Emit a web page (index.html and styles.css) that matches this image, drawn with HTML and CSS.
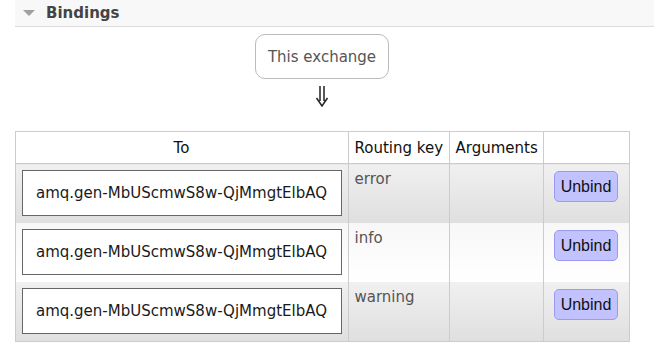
FILE: index.html
```html
<!DOCTYPE html>
<html lang="en">
<head>
  <meta charset="UTF-8">
  <title>Bindings</title>
  <link rel="stylesheet" href="styles.css">
</head>
<body>
  <div class="section">
    <h2 class="section-title"><span class="toggle"></span>Bindings</h2>

    <div class="bindings">
      <div class="source-box">This exchange</div>
      <svg class="down-arrow" width="14" height="21" viewBox="0 0 14 21">
        <path d="M5 0 V15 M9 0 V15 M1.5 12 L7 20 L12.5 12" fill="none" stroke="#222" stroke-width="1.5"/>
      </svg>

      <table class="list">
        <colgroup>
          <col class="c-to">
          <col class="c-key">
          <col class="c-args">
          <col class="c-act">
        </colgroup>
        <thead>
          <tr>
            <th class="col-to">To</th>
            <th>Routing key</th>
            <th>Arguments</th>
            <th></th>
          </tr>
        </thead>
        <tbody>
          <tr class="alt1">
            <td><div class="dest">amq.gen-MbUScmwS8w-QjMmgtElbAQ</div></td>
            <td class="key">error</td>
            <td></td>
            <td class="action"><button class="unbind">Unbind</button></td>
          </tr>
          <tr class="alt2">
            <td><div class="dest">amq.gen-MbUScmwS8w-QjMmgtElbAQ</div></td>
            <td class="key">info</td>
            <td></td>
            <td class="action"><button class="unbind">Unbind</button></td>
          </tr>
          <tr class="alt1">
            <td><div class="dest">amq.gen-MbUScmwS8w-QjMmgtElbAQ</div></td>
            <td class="key">warning</td>
            <td></td>
            <td class="action"><button class="unbind">Unbind</button></td>
          </tr>
        </tbody>
      </table>
    </div>
  </div>
</body>
</html>
```

FILE: styles.css
```css
body {
  margin: 0;
  background: #fff;
  font-family: Verdana, "DejaVu Sans", sans-serif;
  font-size: 15px;
  color: #222;
}

.section {
  padding-left: 15px;
}

.section-title {
  margin: 0;
  height: 26px;
  display: flex;
  align-items: center;
  padding-left: 8px;
  background: #f8f8f8;
  border-bottom: 1px solid #ddd;
  font-size: 15px;
  font-weight: bold;
  color: #444;
}

.toggle {
  width: 0;
  height: 0;
  border-left: 6.5px solid transparent;
  border-right: 6.5px solid transparent;
  border-top: 6px solid #a0a0a0;
  margin-right: 11px;
}

.bindings {
  width: 614px;
  display: flex;
  flex-direction: column;
  align-items: center;
}

.source-box {
  margin-top: 7px;
  padding: 13px 12px 11px;
  line-height: 19px;
  border: 1px solid #bbb;
  border-radius: 10px;
  color: #555;
}

.down-arrow {
  display: block;
  margin-top: 7px;
  margin-bottom: 24px;
}

table.list {
  width: 614px;
  table-layout: fixed;
  border-collapse: collapse;
  border: 1px solid #ccc;
}

col.c-to { width: 333px; }
col.c-key { width: 101px; }
col.c-args { width: 94px; }
col.c-act { width: 86px; }

table.list th {
  height: 31px;
  padding: 0 6px;
  border: 1px solid #ccc;
  font-weight: normal;
  text-align: left;
  white-space: nowrap;
  color: #111;
  background: #fff;
}

table.list th.col-to {
  text-align: center;
}

table.list td {
  padding: 6px 6px 7px;
  vertical-align: top;
  border-left: 1px solid #ccc;
  border-right: 1px solid #ccc;
}

tr.alt1 td {
  background: linear-gradient(#f0f0f0, #dfdfdf);
}

tr.alt2 td {
  background: linear-gradient(#f7f7f7, #ffffff);
}

.dest {
  height: 44px;
  line-height: 44px;
  border: 1px solid #666;
  background: #fff;
  text-align: center;
  color: #1a1a1a;
}

td.key {
  color: #555;
  line-height: 19px;
  padding-top: 6px;
}

td.action {
  text-align: center;
}

.unbind {
  margin-top: 1px;
  height: 31px;
  padding: 0 6px;
  font-family: "Liberation Sans", Arial, sans-serif;
  font-size: 16px;
  color: #111;
  background: #c2c2ff;
  border: 1px solid #9a9aee;
  border-radius: 5px;
}
```
